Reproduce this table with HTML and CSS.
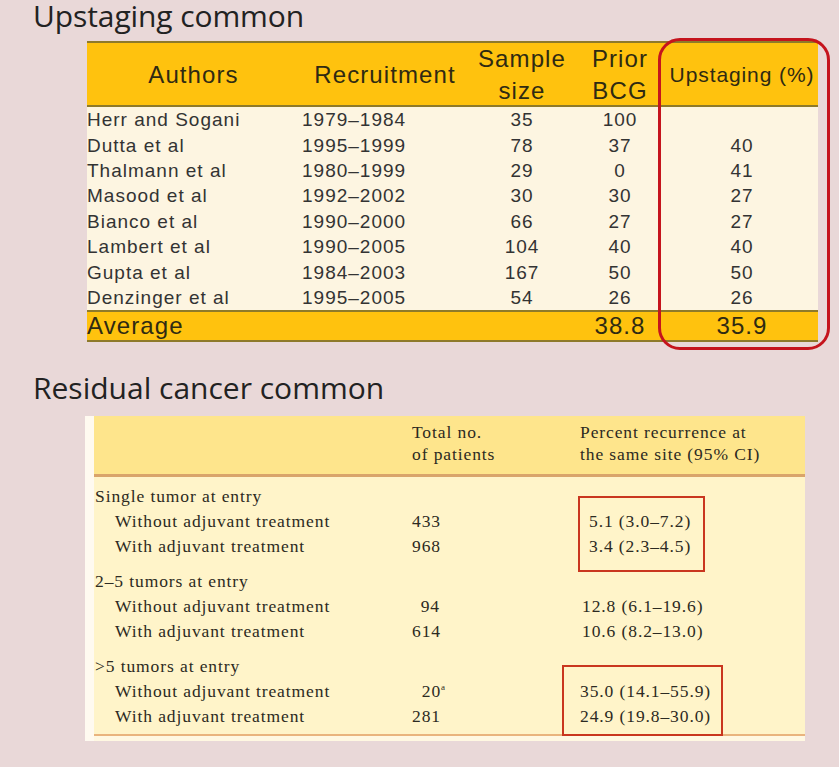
FILE: index.html
```html
<!DOCTYPE html>
<html>
<head>
<meta charset="utf-8">
<link rel="stylesheet" href="styles.css">
</head>
<body>
<div class="page">
  <h1 class="title t-first">Upstaging common</h1>
  <div class="t1wrap">
    <div class="t1">
      <div class="row head">
        <div class="c c1 hc">Authors</div>
        <div class="c c2 hc">Recruitment</div>
        <div class="c c3">Sample<br>size</div>
        <div class="c c4">Prior<br>BCG</div>
        <div class="c c5 small">Upstaging (%)</div>
      </div>
      <div class="body">
        <div class="row"><div class="c c1">Herr and Sogani</div><div class="c c2">1979–1984</div><div class="c c3">35</div><div class="c c4">100</div><div class="c c5"></div></div>
        <div class="row"><div class="c c1">Dutta et al</div><div class="c c2">1995–1999</div><div class="c c3">78</div><div class="c c4">37</div><div class="c c5">40</div></div>
        <div class="row"><div class="c c1">Thalmann et al</div><div class="c c2">1980–1999</div><div class="c c3">29</div><div class="c c4">0</div><div class="c c5">41</div></div>
        <div class="row"><div class="c c1">Masood et al</div><div class="c c2">1992–2002</div><div class="c c3">30</div><div class="c c4">30</div><div class="c c5">27</div></div>
        <div class="row"><div class="c c1">Bianco et al</div><div class="c c2">1990–2000</div><div class="c c3">66</div><div class="c c4">27</div><div class="c c5">27</div></div>
        <div class="row"><div class="c c1">Lambert et al</div><div class="c c2">1990–2005</div><div class="c c3">104</div><div class="c c4">40</div><div class="c c5">40</div></div>
        <div class="row"><div class="c c1">Gupta et al</div><div class="c c2">1984–2003</div><div class="c c3">167</div><div class="c c4">50</div><div class="c c5">50</div></div>
        <div class="row"><div class="c c1">Denzinger et al</div><div class="c c2">1995–2005</div><div class="c c3">54</div><div class="c c4">26</div><div class="c c5">26</div></div>
      </div>
      <div class="row avg">
        <div class="c c1">Average</div>
        <div class="c c2"></div>
        <div class="c c3"></div>
        <div class="c c4">38.8</div>
        <div class="c c5">35.9</div>
      </div>
    </div>
    <div class="ring"></div>
  </div>

  <h2 class="title t-second">Residual cancer common</h2>
  <div class="t2">
    <div class="t2head">
      <div class="g1"></div>
      <div class="g2">Total no.<br>of patients</div>
      <div class="g3">Percent recurrence at<br>the same site (95% CI)</div>
    </div>
    <div class="t2body">
      <div class="grp">
        <div class="r2"><div class="g1">Single tumor at entry</div><div class="g2"></div><div class="g3"></div></div>
        <div class="r2"><div class="g1 ind">Without adjuvant treatment</div><div class="g2"><span class="n">433</span></div><div class="g3 one">5.1 (3.0–7.2)</div></div>
        <div class="r2"><div class="g1 ind">With adjuvant treatment</div><div class="g2"><span class="n">968</span></div><div class="g3 one">3.4 (2.3–4.5)</div></div>
      </div>
      <div class="grp">
        <div class="r2"><div class="g1">2–5 tumors at entry</div><div class="g2"></div><div class="g3"></div></div>
        <div class="r2"><div class="g1 ind">Without adjuvant treatment</div><div class="g2"><span class="n">94</span></div><div class="g3 two">12.8 (6.1–19.6)</div></div>
        <div class="r2"><div class="g1 ind">With adjuvant treatment</div><div class="g2"><span class="n">614</span></div><div class="g3 two">10.6 (8.2–13.0)</div></div>
      </div>
      <div class="grp">
        <div class="r2"><div class="g1">&gt;5 tumors at entry</div><div class="g2"></div><div class="g3"></div></div>
        <div class="r2"><div class="g1 ind">Without adjuvant treatment</div><div class="g2"><span class="n">20<sup>a</sup></span></div><div class="g3">35.0 (14.1–55.9)</div></div>
        <div class="r2"><div class="g1 ind">With adjuvant treatment</div><div class="g2"><span class="n">281</span></div><div class="g3">24.9 (19.8–30.0)</div></div>
      </div>
    </div>
    <div class="t2foot"></div>
    <div class="box box-a"></div>
    <div class="box box-b"></div>
  </div>
</div>
</body>
</html>
```

FILE: styles.css
```css
html, body {
  margin: 0;
  padding: 0;
}
body {
  background: #e9d8d8;
}
.page {
  position: relative;
  padding-top: 2px;
}
.title {
  margin: 0 0 0 33px;
  font-family: "Open Sans", "Liberation Sans", sans-serif;
  font-weight: 400;
  font-size: 30px;
  color: #222222;
  line-height: 28px;
}
.t-first {
  letter-spacing: -0.1px;
}
.t-second {
  letter-spacing: 0px;
  margin-top: 32px;
}

/* ---------- table 1 ---------- */
.t1wrap {
  position: relative;
  margin: 11px 0 0 87px;
  width: 731px;
}
.t1 {
  font-family: "Liberation Sans", Arial, sans-serif;
  color: #333333;
}
.row {
  display: grid;
  grid-template-columns: 213px 170px 104px 92px 152px;
  align-items: center;
}
.head {
  background: #ffc20e;
  border-top: 2px solid #8e7a2a;
  border-bottom: 2px solid #8e7a2a;
  height: 62px;
  font-size: 24px;
  letter-spacing: 1.1px;
  line-height: 32px;
  color: #2f2a12;
}
.head .c {
  text-align: center;
}
.head .small {
  font-size: 21px;
  letter-spacing: 0.9px;
}
.body {
  background: #fdf5e1;
}
.body .row {
  height: 25.4px;
  font-size: 19px;
  letter-spacing: 1px;
  line-height: 25px;
}
.c3, .c4, .c5 {
  text-align: center;
}
.body .c2 {
  padding-left: 2px;
}
.avg {
  background: #ffc20e;
  border-top: 2px solid #8e7a2a;
  border-bottom: 2px solid #8e7a2a;
  height: 28px;
  font-size: 24px;
  letter-spacing: 1.1px;
  line-height: 28px;
  color: #2f2a12;
}
.ring {
  position: absolute;
  left: 571px;
  top: -3px;
  width: 166px;
  height: 306px;
  border: 3px solid #c5141d;
  border-radius: 22px;
}

/* ---------- table 2 ---------- */
.t2 {
  position: relative;
  margin: 14px 0 0 85px;
  width: 711px;
  border-left: 9px solid #fffaf0;
  font-family: "Liberation Serif", "Times New Roman", serif;
  font-size: 17.5px;
  letter-spacing: 0.9px;
  color: #2c2a22;
}
.t2head {
  display: grid;
  grid-template-columns: 318px 168px 1fr;
  background: #fee58c;
  height: 53px;
  padding-top: 5px;
  border-bottom: 3px solid #d9a46a;
  line-height: 22px;
}
.t2body {
  background: #fff4c9;
  padding: 6.5px 0 5px;
  border-bottom: 2px solid #e9b47e;
}
.grp + .grp {
  margin-top: 10px;
}
.r2 {
  display: grid;
  grid-template-columns: 318px 168px 1fr;
  height: 25px;
  line-height: 25px;
}
.g1 {
  padding-left: 1px;
  white-space: nowrap;
}
.g1.ind {
  padding-left: 21px;
}
.g3 {
  white-space: nowrap;
}
.g3.one {
  padding-left: 9px;
}
.g3.two {
  padding-left: 2px;
}
.n {
  display: inline-block;
  width: 28px;
  text-align: right;
}
.n sup {
  font-size: 9px;
  line-height: 0;
  margin-right: -6px;
}
.t2foot {
  height: 5.5px;
  background: #fff8e2;
}
.box {
  position: absolute;
  border: 2px solid #c9361f;
}
.box-a {
  left: 484px;
  top: 80px;
  width: 123px;
  height: 72px;
}
.box-b {
  left: 468px;
  top: 249px;
  width: 157px;
  height: 67px;
}
```
